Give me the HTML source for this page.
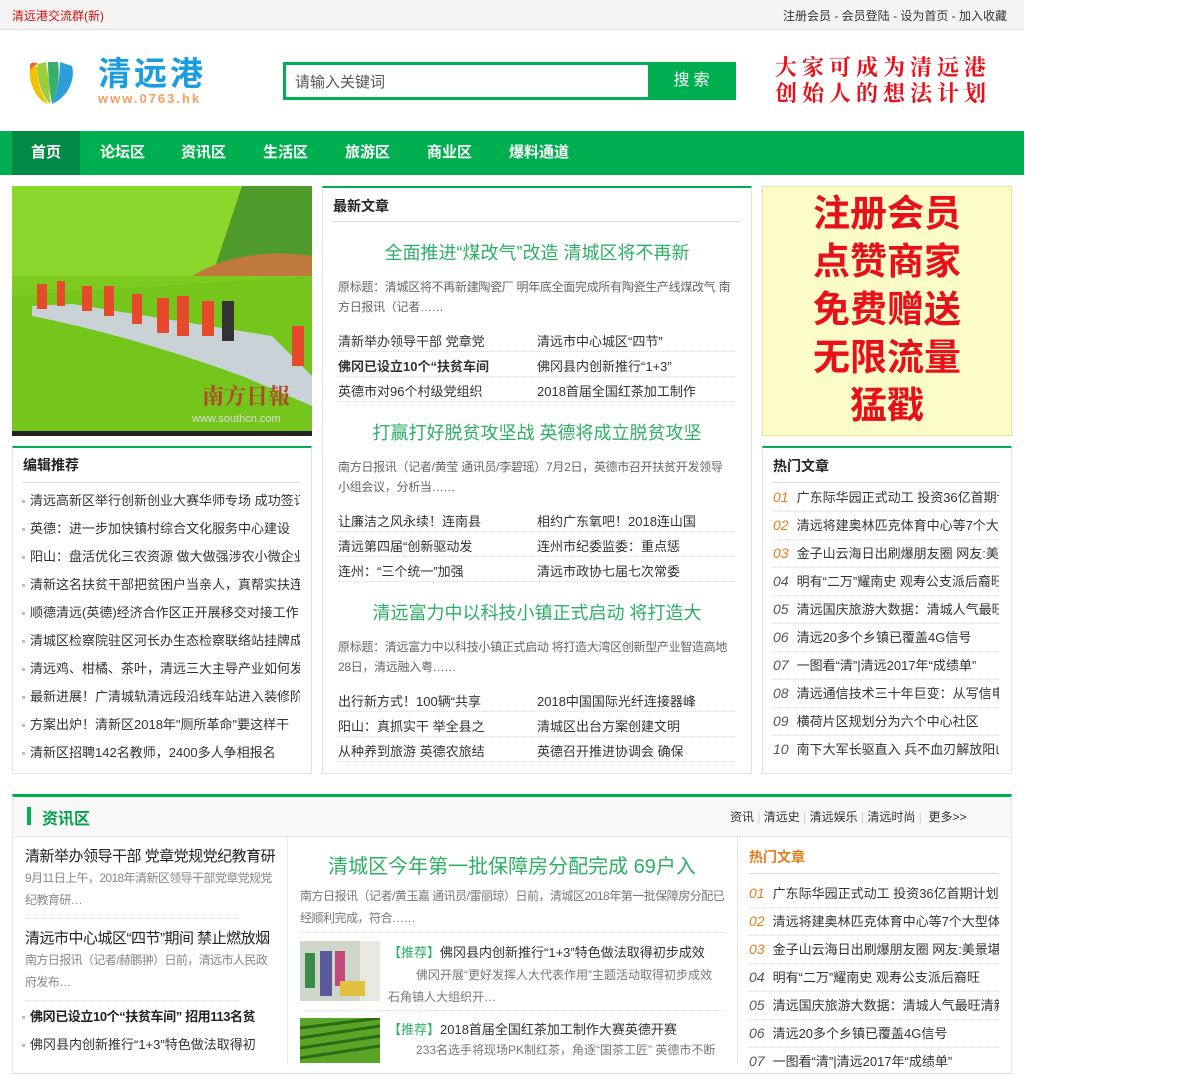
<!DOCTYPE html>
<html><head><meta charset="utf-8"><style>
*{margin:0;padding:0;box-sizing:border-box}
body{width:1200px;height:1063px;overflow:hidden;background:#fff;font-family:"Liberation Sans","Noto Sans CJK SC",sans-serif;font-size:13px;color:#333;position:relative}
.a{position:absolute;white-space:nowrap;overflow:hidden}
.topbar{left:0;top:0;width:1024px;height:30px;background:#f4f4f4;border-bottom:1px solid #e2e2e2}
.nav{left:0;top:131px;width:1024px;height:44px;background:#00af50}
.nav span{position:absolute;top:0;line-height:44px;color:#fff;font-size:15px;font-weight:bold}
.box{position:absolute;border:1px solid #e2e2e2;border-top:2px solid #00af50;background:#fff}
.ttl{font-size:14px;font-weight:bold;color:#222}
.li{font-size:13px;color:#333}
.li>div{height:28px;line-height:27px;overflow:hidden}
.dot{display:inline-block;width:3px;height:3px;background:#bbb;margin-right:5px;vertical-align:middle}
.dl{position:absolute;height:0;border-top:1px dotted #ddd}
.g{color:#2eaf66}
.gr{color:#666}
.num{font-style:italic;color:#e37c1d;font-size:14px;margin-right:8px}
.num2{font-style:italic;color:#555;font-size:14px;margin-right:8px}
.ds{font-size:12px;letter-spacing:-0.3px}
</style></head><body>
<div class="a topbar"></div>
<div class="a" style="left:12px;top:7px;color:#d01010;font-size:12px">清远港交流群(新)</div>
<div class="a" style="left:783px;top:7px;color:#333;font-size:12px">注册会员 - 会员登陆 - 设为首页 - 加入收藏</div>

<svg class="a" style="left:26px;top:58px" width="52" height="48" viewBox="0 0 52 48">
<path d="M4 10 C2 24 10 42 22 46 C14 34 10 20 12 8Z" fill="#f2c200"/>
<path d="M12 6 C10 22 16 38 24 46 C24 30 22 16 20 4Z" fill="#9bcf3a"/>
<path d="M22 4 C22 20 24 36 26 46 C32 32 34 16 32 4Z" fill="#38b06a"/>
<path d="M34 4 C34 22 30 36 26 46 C40 40 50 24 46 8Z" fill="#2d9fd8"/>
<path d="M4 6 C6 4 10 4 12 6 C8 8 6 10 4 12Z" fill="#ef6a1f"/>
</svg>
<div class="a" style="left:98px;top:54px;font-size:33px;font-weight:bold;color:#1a9ee0;letter-spacing:3px;line-height:40px">清远港</div>
<div class="a" style="left:98px;top:91px;font-size:13px;font-weight:bold;color:#f0a060;letter-spacing:2px">www.0763.hk</div>

<div class="a" style="left:283px;top:62px;width:368px;height:38px;border:3px solid #00af50;background:#fff"></div>
<div class="a" style="left:295px;top:71px;font-size:15px;color:#555">请输入关键词</div>
<div class="a" style="left:651px;top:62px;width:85px;height:38px;background:#00af50;color:#fff;font-size:16px;text-align:center;line-height:38px;letter-spacing:4px">搜索</div>

<div class="a" style="left:775px;top:54px;font-family:'Noto Serif CJK SC',serif;font-weight:bold;color:#e8101a;font-size:22px;letter-spacing:5px;line-height:26px">大家可成为清远港<br>创始人的想法计划</div>

<div class="a nav">
<div style="position:absolute;left:12px;top:0;width:68px;height:44px;background:#008a45"></div>
<span style="left:31px">首页</span><span style="left:100px">论坛区</span><span style="left:181px">资讯区</span><span style="left:263px">生活区</span><span style="left:345px">旅游区</span><span style="left:427px">商业区</span><span style="left:509px">爆料通道</span>
</div>

<svg class="a" style="left:12px;top:186px" width="300" height="250" viewBox="0 0 300 250">
<rect width="300" height="250" fill="#7ccb1e"/>
<rect width="300" height="90" fill="#8ad62a"/>
<path d="M230 0 L300 0 L300 90 L200 90 Z" fill="#4e9a2a"/>
<path d="M180 90 Q230 60 300 70 L300 90Z" fill="#c07b3c"/>
<path d="M0 110 L300 90 L300 250 L0 250Z" fill="#74c51c"/>
<path d="M20 120 L60 118 L260 150 L300 190 L300 220 L230 190 Q120 150 20 130Z" fill="#c9d2d6"/>
<g fill="#e64a2a"><rect x="25" y="98" width="10" height="25"/><rect x="45" y="95" width="8" height="25"/><rect x="70" y="100" width="10" height="25"/><rect x="92" y="100" width="10" height="30"/><rect x="120" y="108" width="10" height="30"/><rect x="145" y="112" width="12" height="35"/><rect x="165" y="110" width="12" height="40"/><rect x="190" y="115" width="12" height="35"/><rect x="280" y="140" width="12" height="40"/></g>
<rect x="210" y="115" width="12" height="40" fill="#333"/>
<text x="190" y="218" font-family="Noto Serif CJK SC,serif" font-size="22" fill="#b0472a" font-weight="bold">南方日報</text>
<text x="180" y="236" font-size="11" fill="#ddd">www.southcn.com</text>
<rect y="245" width="300" height="5" fill="#222"/>
</svg>

<div class="box" style="left:12px;top:446px;width:300px;height:328px"></div>
<div class="a ttl" style="left:23px;top:455px">编辑推荐</div>
<div class="dl" style="left:22px;top:482px;width:278px;border-top:1px solid #ddd"></div>
<div class="a li" style="left:22px;top:487px;width:278px">
<div><i class="dot"></i>清远高新区举行创新创业大赛华师专场 成功签订合</div>
<div><i class="dot"></i>英德：进一步加快镇村综合文化服务中心建设</div>
<div><i class="dot"></i>阳山：盘活优化三农资源 做大做强涉农小微企业</div>
<div><i class="dot"></i>清新这名扶贫干部把贫困户当亲人，真帮实扶连续</div>
<div><i class="dot"></i>顺德清远(英德)经济合作区正开展移交对接工作</div>
<div><i class="dot"></i>清城区检察院驻区河长办生态检察联络站挂牌成立</div>
<div><i class="dot"></i>清远鸡、柑橘、茶叶，清远三大主导产业如何发力</div>
<div><i class="dot"></i>最新进展！广清城轨清远段沿线车站进入装修阶段</div>
<div><i class="dot"></i>方案出炉！清新区2018年"厕所革命"要这样干</div>
<div><i class="dot"></i>清新区招聘142名教师，2400多人争相报名</div>
</div>

<div class="box" style="left:322px;top:186px;width:430px;height:588px"></div>
<div class="a ttl" style="left:333px;top:196px">最新文章</div>
<div class="dl" style="left:332px;top:221px;width:409px;border-top:1px solid #ddd"></div>

<div class="a g" style="left:322px;top:239px;width:430px;text-align:center;font-size:18px">全面推进“煤改气”改造 清城区将不再新</div>
<div class="a gr ds" style="left:338px;top:277px;line-height:20px;white-space:normal;width:395px">原标题：清城区将不再新建陶瓷厂 明年底全面完成所有陶瓷生产线煤改气 南方日报讯（记者……</div>
<div class="a li" style="left:338px;top:331px">清新举办领导干部 党章党</div><div class="a li" style="left:537px;top:331px">清远市中心城区“四节”</div>
<div class="dl" style="left:338px;top:351px;width:398px"></div>
<div class="a li" style="left:338px;top:356px;font-weight:bold">佛冈已设立10个“扶贫车间</div><div class="a li" style="left:537px;top:356px">佛冈县内创新推行“1+3”</div>
<div class="dl" style="left:338px;top:376px;width:398px"></div>
<div class="a li" style="left:338px;top:381px">英德市对96个村级党组织</div><div class="a li" style="left:537px;top:381px">2018首届全国红茶加工制作</div>
<div class="dl" style="left:338px;top:401px;width:398px"></div>

<div class="a g" style="left:322px;top:419px;width:430px;text-align:center;font-size:18px">打赢打好脱贫攻坚战 英德将成立脱贫攻坚</div>
<div class="a gr ds" style="left:338px;top:457px;line-height:20px;white-space:normal;width:395px">南方日报讯（记者/黄莹 通讯员/李碧瑶）7月2日，英德市召开扶贫开发领导小组会议，分析当……</div>
<div class="a li" style="left:338px;top:511px">让廉洁之风永续！连南县</div><div class="a li" style="left:537px;top:511px">相约广东氧吧！2018连山国</div>
<div class="dl" style="left:338px;top:531px;width:398px"></div>
<div class="a li" style="left:338px;top:536px">清远第四届“创新驱动发</div><div class="a li" style="left:537px;top:536px">连州市纪委监委：重点惩</div>
<div class="dl" style="left:338px;top:556px;width:398px"></div>
<div class="a li" style="left:338px;top:561px">连州：“三个统一”加强</div><div class="a li" style="left:537px;top:561px">清远市政协七届七次常委</div>
<div class="dl" style="left:338px;top:581px;width:398px"></div>

<div class="a g" style="left:322px;top:599px;width:430px;text-align:center;font-size:18px">清远富力中以科技小镇正式启动 将打造大</div>
<div class="a gr ds" style="left:338px;top:637px;line-height:20px;white-space:normal;width:395px">原标题：清远富力中以科技小镇正式启动 将打造大湾区创新型产业智造高地 28日，清远融入粤……</div>
<div class="a li" style="left:338px;top:691px">出行新方式！100辆“共享</div><div class="a li" style="left:537px;top:691px">2018中国国际光纤连接器峰</div>
<div class="dl" style="left:338px;top:711px;width:398px"></div>
<div class="a li" style="left:338px;top:716px">阳山：真抓实干 举全县之</div><div class="a li" style="left:537px;top:716px">清城区出台方案创建文明</div>
<div class="dl" style="left:338px;top:736px;width:398px"></div>
<div class="a li" style="left:338px;top:741px">从种养到旅游 英德农旅结</div><div class="a li" style="left:537px;top:741px">英德召开推进协调会 确保</div>
<div class="dl" style="left:338px;top:761px;width:398px"></div>

<div class="a" style="left:762px;top:186px;width:250px;height:250px;background:#fbfcc8;border:1px solid #e5e5a0"></div>
<div class="a" style="left:762px;top:190px;width:250px;text-align:center;color:#e8101a;font-size:37px;font-weight:bold;line-height:48px">注册会员<br>点赞商家<br>免费赠送<br>无限流量<br>猛戳</div>

<div class="box" style="left:762px;top:446px;width:250px;height:328px"></div>
<div class="a ttl" style="left:773px;top:456px">热门文章</div>
<div class="dl" style="left:772px;top:482px;width:228px;border-top:1px solid #ddd"></div>
<div class="a li" style="left:773px;top:484px;width:226px">
<div style="border-bottom:1px dotted #ddd"><span class="num">01</span>广东际华园正式动工 投资36亿首期计</div>
<div style="border-bottom:1px dotted #ddd"><span class="num">02</span>清远将建奥林匹克体育中心等7个大型</div>
<div style="border-bottom:1px dotted #ddd"><span class="num">03</span>金子山云海日出刷爆朋友圈 网友:美景</div>
<div style="border-bottom:1px dotted #ddd"><span class="num2">04</span>明有“二万”耀南史 观寿公支派后裔旺</div>
<div style="border-bottom:1px dotted #ddd"><span class="num2">05</span>清远国庆旅游大数据：清城人气最旺</div>
<div style="border-bottom:1px dotted #ddd"><span class="num2">06</span>清远20多个乡镇已覆盖4G信号</div>
<div style="border-bottom:1px dotted #ddd"><span class="num2">07</span>一图看“清”|清远2017年“成绩单”</div>
<div style="border-bottom:1px dotted #ddd"><span class="num2">08</span>清远通信技术三十年巨变：从写信电</div>
<div style="border-bottom:1px dotted #ddd"><span class="num2">09</span>横荷片区规划分为六个中心社区</div>
<div><span class="num2">10</span>南下大军长驱直入 兵不血刃解放阳山</div>
</div>

<div class="a" style="left:12px;top:794px;width:1000px;height:280px;border:1px solid #e2e2e2;border-top:3px solid #00af50"></div>
<div class="a" style="left:13px;top:797px;width:998px;height:40px;background:#f8f8f8;border-bottom:1px solid #e6e6e6"></div>
<div class="a" style="left:27px;top:807px;width:4px;height:18px;background:#00af50"></div>
<div class="a" style="left:42px;top:805px;font-size:16px;font-weight:bold;color:#00a04a">资讯区</div>
<div class="a" style="left:730px;top:808px;font-size:12px;color:#333">资讯 <span style="color:#ccc">|</span> 清远史 <span style="color:#ccc">|</span> 清远娱乐 <span style="color:#ccc">|</span> 清远时尚 <span style="color:#ccc">|</span>&nbsp; 更多&gt;&gt;</div>
<div class="a" style="left:287px;top:837px;width:1px;height:226px;background:#e6e6e6"></div>
<div class="a" style="left:737px;top:837px;width:1px;height:226px;background:#e6e6e6"></div>

<div class="a" style="left:25px;top:845px;font-size:15px;color:#222;letter-spacing:-0.5px">清新举办领导干部 党章党规党纪教育研</div>
<div class="a ds" style="left:25px;top:867px;line-height:22px;white-space:normal;width:252px;color:#888;letter-spacing:-0.6px">9月11日上午，2018年清新区领导干部党章党规党纪教育研…</div>
<div class="dl" style="left:25px;top:918px;width:215px"></div>
<div class="a" style="left:25px;top:927px;font-size:15px;color:#222;letter-spacing:-0.5px">清远市中心城区“四节”期间 禁止燃放烟</div>
<div class="a ds" style="left:25px;top:949px;line-height:22px;white-space:normal;width:252px;color:#888;letter-spacing:-0.6px">南方日报讯（记者/赫鹏翀）日前，清远市人民政府发布…</div>
<div class="dl" style="left:25px;top:1000px;width:215px"></div>
<div class="a" style="left:22px;top:1006px;font-size:13px;font-weight:bold;color:#222;letter-spacing:-0.4px"><i class="dot"></i>佛冈已设立10个“扶贫车间” 招用113名贫</div>
<div class="a" style="left:22px;top:1034px;font-size:13px;color:#333"><i class="dot"></i>佛冈县内创新推行“1+3”特色做法取得初</div>

<div class="a g" style="left:287px;top:850px;width:450px;text-align:center;font-size:20px">清城区今年第一批保障房分配完成 69户入</div>
<div class="a ds" style="left:300px;top:885px;line-height:22px;white-space:normal;width:425px;color:#777;letter-spacing:-0.5px">南方日报讯（记者/黄玉嘉 通讯员/雷丽琼）日前，清城区2018年第一批保障房分配已经顺利完成，符合……</div>
<div class="dl" style="left:300px;top:932px;width:425px"></div>
<svg class="a" style="left:300px;top:941px" width="80" height="60"><rect width="80" height="60" fill="#cfd8c8"/><rect x="60" width="20" height="60" fill="#e8e8e0"/><rect x="20" y="10" width="12" height="45" fill="#5a5a9a"/><rect x="5" y="12" width="10" height="35" fill="#3a8a4a"/><rect x="35" y="10" width="10" height="35" fill="#c04a7a"/><rect x="40" y="40" width="25" height="15" fill="#e4c040"/></svg>
<div class="a" style="left:388px;top:942px;font-size:13px;color:#333"><span class="g">【推荐】</span>佛冈县内创新推行“1+3”特色做法取得初步成效</div>
<div class="a" style="left:388px;top:964px;font-size:12px;line-height:22px;white-space:normal;width:330px;color:#777;text-indent:28px">佛冈开展“更好发挥人大代表作用”主题活动取得初步成效 石角镇人大组织开…</div>
<div class="dl" style="left:300px;top:1010px;width:425px"></div>
<svg class="a" style="left:300px;top:1018px" width="80" height="45"><rect width="80" height="45" fill="#5aa528"/><path d="M0 10 L80 0 M0 20 L80 8 M0 30 L80 18 M0 40 L80 28" stroke="#2c6a16" stroke-width="3"/></svg>
<div class="a" style="left:388px;top:1019px;font-size:13px;color:#333"><span class="g">【推荐】</span>2018首届全国红茶加工制作大赛英德开赛</div>
<div class="a" style="left:388px;top:1041px;font-size:12px;color:#777;text-indent:28px;width:335px">233名选手将现场PK制红茶，角逐“国茶工匠” 英德市不断</div>

<div class="a" style="left:749px;top:847px;font-size:14px;font-weight:bold;color:#e37c1d">热门文章</div>
<div class="dl" style="left:748px;top:873px;width:251px;border-top:1px solid #ddd"></div>
<div class="a li" style="left:749px;top:880px;width:250px">
<div style="border-bottom:1px dotted #ddd"><span class="num">01</span>广东际华园正式动工 投资36亿首期计划</div>
<div style="border-bottom:1px dotted #ddd"><span class="num">02</span>清远将建奥林匹克体育中心等7个大型体育</div>
<div style="border-bottom:1px dotted #ddd"><span class="num">03</span>金子山云海日出刷爆朋友圈 网友:美景堪比</div>
<div style="border-bottom:1px dotted #ddd"><span class="num2">04</span>明有“二万”耀南史 观寿公支派后裔旺</div>
<div style="border-bottom:1px dotted #ddd"><span class="num2">05</span>清远国庆旅游大数据：清城人气最旺清新最</div>
<div style="border-bottom:1px dotted #ddd"><span class="num2">06</span>清远20多个乡镇已覆盖4G信号</div>
<div><span class="num2">07</span>一图看“清”|清远2017年“成绩单”</div>
</div>
</body></html>
